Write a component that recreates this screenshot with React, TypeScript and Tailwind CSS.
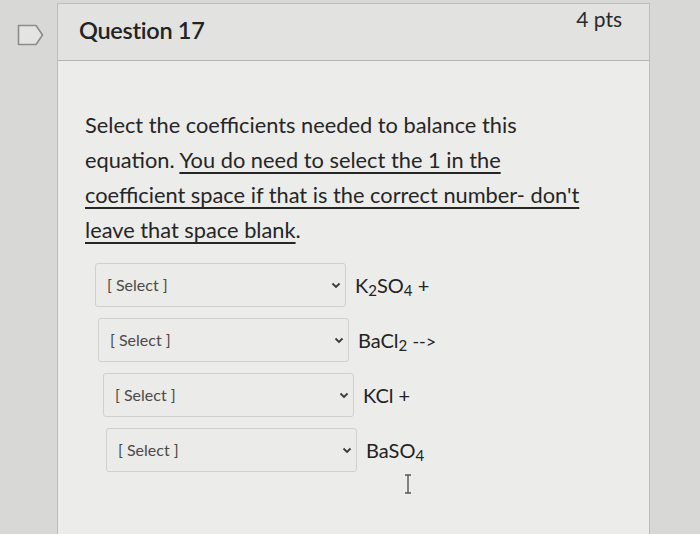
import React from "react";

const sub = "text-[15px] relative top-[3px] align-baseline";

const rows: { label: React.ReactNode; offset: string }[] = [
  {
    label: (
      <>
        K<sub className={sub}>2</sub>SO<sub className={sub}>4</sub> +
      </>
    ),
    offset: "ml-[10px]",
  },
  {
    label: (
      <>
        BaCl<sub className={sub}>2</sub> <span className="text-[18px]">--&gt;</span>
      </>
    ),
    offset: "ml-[13px]",
  },
  { label: <>KCl +</>, offset: "ml-[18px]" },
  {
    label: (
      <>
        BaSO<sub className={sub}>4</sub>
      </>
    ),
    offset: "ml-[21px]",
  },
];

function Chevron() {
  return (
    <svg width="10" height="7" viewBox="0 0 10 7" className="text-[#3a3a3a]">
      <path d="M1.5 1.5 L5 5 L8.5 1.5" fill="none" stroke="currentColor" strokeWidth="1.8" />
    </svg>
  );
}

export default function App() {
  return (
    <div
      className="relative flex h-[534px] w-[700px] overflow-hidden bg-[#d8d8d6]"
      style={{ fontFamily: "Lato, 'Open Sans', sans-serif" }}
    >
      <div className="w-[57px] shrink-0 pl-[17px] pt-[24px]">
        <svg width="28" height="22" viewBox="0 0 28 22">
          <path
            d="M1.5 1.5 H19 L25.5 11 L19 20.5 H1.5 Z"
            fill="#e4e4e2"
            stroke="#8c8c8a"
            strokeWidth="1.6"
            strokeLinejoin="round"
          />
        </svg>
      </div>

      <div className="mt-[3px] w-[593px] shrink-0 border-x border-t border-[#bdbdbb] bg-[#ececea]">
        <div className="flex h-[57px] justify-between border-b border-[#b5b5b3] bg-[#e2e2e0] pl-[21px] pr-[27px]">
          <h2 className="pt-[9px] text-[23.5px] font-semibold tracking-[-0.3px] text-[#232323]">
            Question 17
          </h2>
          <span className="-mt-[1px] text-[21px] text-[#2a2a2a]">4 pts</span>
        </div>

        <div className="pl-[27px] pt-[46px]">
          <p className="text-[21.8px] leading-[35px] text-[#262626]">
            Select the coefficients needed to balance this
            <br />
            equation.{" "}
            <span className="underline decoration-[1.5px] underline-offset-[4px]">
              You do need to select the 1 in the
              <br />
              coefficient space if that is the correct number- don't
              <br />
              leave that space blank
            </span>
            .
          </p>

          <div className="mt-[16px] flex flex-col gap-[11px]">
            {rows.map((r, i) => (
              <div key={i} className={`flex items-center ${r.offset}`}>
                <div className="flex h-[44px] w-[251px] items-center justify-between rounded-[3px] border border-[#d0d0ce] bg-[#ebebe9] pl-[11px] pr-[4px]">
                  <span className="text-[16px] text-[#4a4a4a]">[ Select ]</span>
                  <Chevron />
                </div>
                <span className="ml-[9px] text-[20px] text-[#222]">{r.label}</span>
              </div>
            ))}
          </div>
        </div>
      </div>

      {/* text cursor caught in the screenshot */}
      <svg
        className="absolute left-[403px] top-[474px]"
        width="10"
        height="20"
        viewBox="0 0 10 20"
      >
        <path d="M2 1 H8 M5 1 V19 M2 19 H8" fill="none" stroke="#555" strokeWidth="1.4" />
      </svg>
    </div>
  );
}
